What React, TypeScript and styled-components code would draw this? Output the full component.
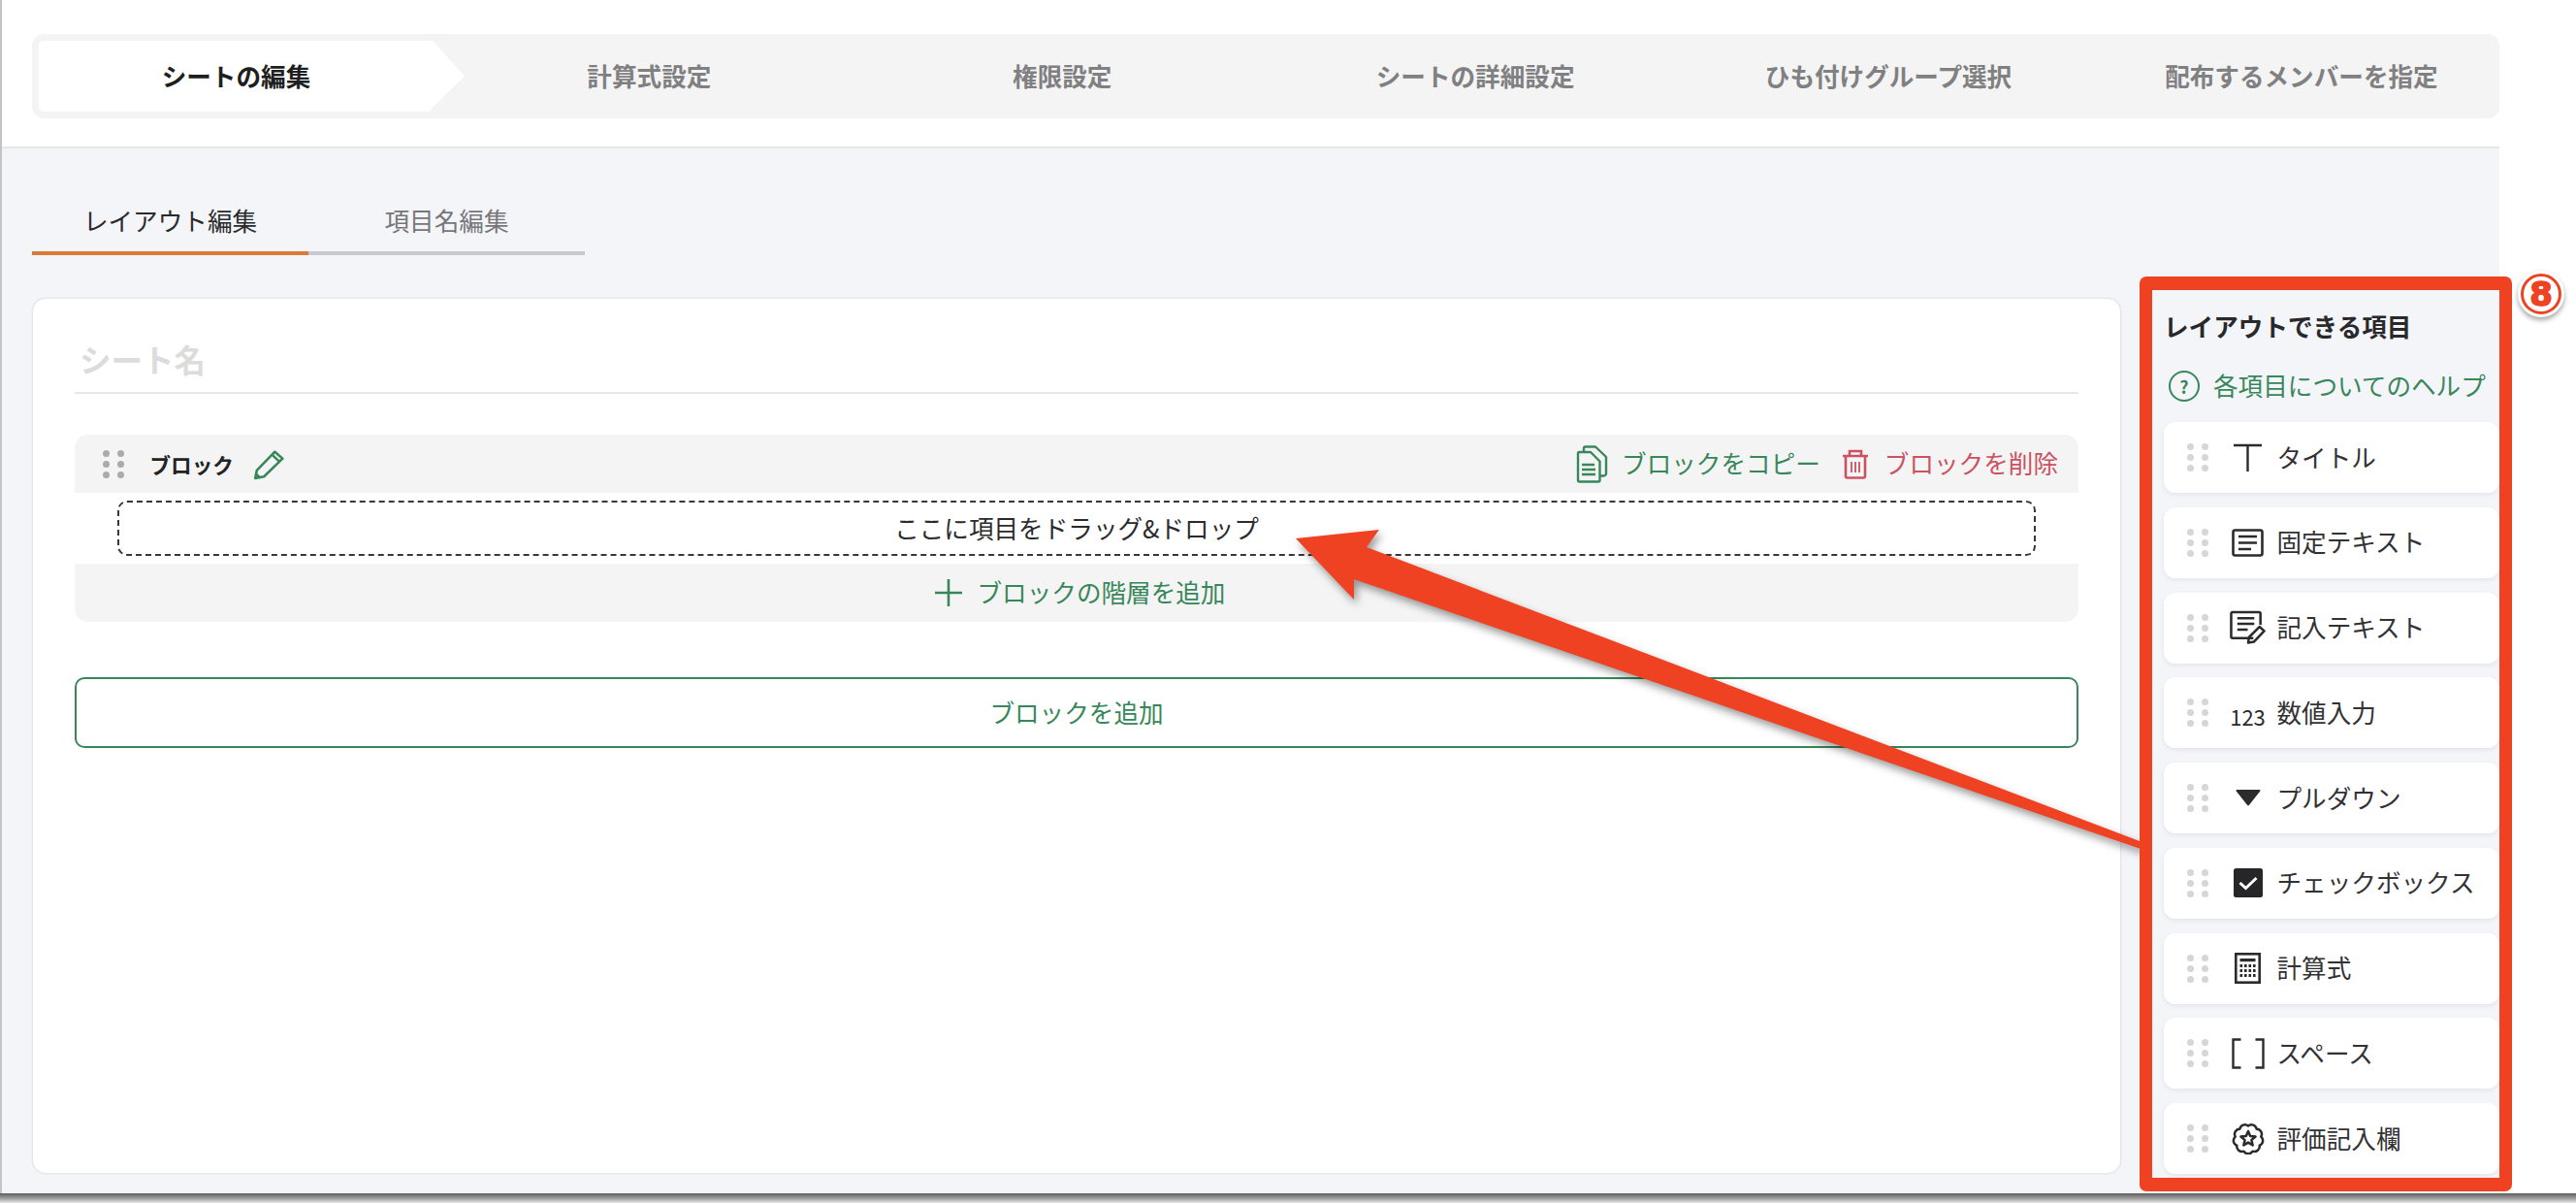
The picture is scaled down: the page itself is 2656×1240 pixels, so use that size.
import React from "react";
import styled, { createGlobalStyle } from "styled-components";

const GREEN = "#38875a";
const RED = "#ca5263";
const INK = "#2b2b2e";
const ANNOTATION = "#ee4223";

const GlobalStyle = createGlobalStyle`
  html, body {
    margin: 0;
    padding: 0;
    background: #fff;
  }
  * {
    box-sizing: border-box;
  }
  body {
    font-family: "Noto Sans CJK JP", "Noto Sans", sans-serif;
    color: ${INK};
  }
`;

const Screen = styled.div`
  position: relative;
  width: 2656px;
  height: 1240px;
  overflow: hidden;
  display: flex;
  flex-direction: column;
  background: #fff;
`;

const AppWindow = styled.div`
  width: 2577px;
  height: 1230px;
  flex: none;
  display: flex;
  flex-direction: column;
  border-left: 2px solid #c4c4c6;
`;

const WindowShadow = styled.div`
  height: 10px;
  flex: none;
  background: linear-gradient(#5e5e5e, #9a9a9a 50%, #e6e6e6);
`;

const Header = styled.header`
  height: 153px;
  flex: none;
  padding: 35px 0 0 31px;
  background: #fff;
  border-bottom: 2px solid #e6e7ea;
`;

const Stepper = styled.nav`
  position: relative;
  height: 87px;
  display: grid;
  grid-template-columns: repeat(6, 425.9px);
  background: #f4f4f4;
  border-radius: 12px;
  isolation: isolate;
`;

const StepTab = styled.div<{ $active?: boolean }>`
  margin-left: -5px;
  padding-bottom: 2px;
  display: flex;
  align-items: center;
  justify-content: center;
  font-size: 25.6px;
  font-weight: 700;
  white-space: nowrap;
  color: ${(p) => (p.$active ? "#1f1f21" : "#808082")};

  ${(p) =>
    p.$active &&
    `
    &::before {
      content: "";
      position: absolute;
      z-index: -1;
      left: 7px;
      top: 7px;
      width: 439px;
      height: 73px;
      background: #fff;
      border-radius: 5px 0 0 5px;
      clip-path: polygon(0 0, 406px 0, 439px 50%, 402px 100%, 0 100%);
    }
  `}
`;

const Body = styled.main`
  flex: 1;
  min-height: 0;
  display: flex;
  flex-direction: column;
  padding: 44px 0 0 31px;
  background: #f4f5f9;
`;

const Tabs = styled.div`
  display: flex;
  flex: none;
`;

const TabItem = styled.div<{ $active?: boolean }>`
  width: 285px;
  height: 66px;
  padding-bottom: 4px;
  display: flex;
  align-items: center;
  justify-content: center;
  font-size: 25.6px;
  color: ${(p) => (p.$active ? "#2b2b2e" : "#77777a")};
  border-bottom: 4px solid ${(p) => (p.$active ? "#d97a38" : "#c9cacf")};
`;

const Columns = styled.div`
  flex: 1;
  min-height: 0;
  margin-top: 44px;
  display: flex;
  align-items: flex-start;
`;

const Card = styled.section`
  width: 2154px;
  height: 903px;
  flex: none;
  padding: 38px 43px 0;
  display: flex;
  flex-direction: column;
  background: #fff;
  border: 1px solid #e4e4e9;
  border-radius: 14px;
  box-shadow: 0 0 2px rgba(40, 40, 70, 0.08);
`;

const SheetName = styled.div`
  height: 60px;
  flex: none;
  font-size: 32.5px;
  line-height: 48px;
  font-weight: 700;
  color: #dcdcdc;
  padding-left: 5px;
  border-bottom: 2px solid #e8e8e8;
`;

const Block = styled.div`
  margin-top: 42px;
  flex: none;
  height: 193px;
  display: flex;
  flex-direction: column;
  background: #f4f4f4;
  border-radius: 14px;
  overflow: hidden;
`;

const BlockHeader = styled.div`
  height: 60px;
  flex: none;
  display: flex;
  align-items: center;
  padding: 0 21px 0 29px;
`;

const BlockName = styled.span`
  margin-left: 26.5px;
  font-size: 21.6px;
  font-weight: 700;
  color: #232325;
`;

const EditButton = styled.span`
  margin-left: 20px;
  display: flex;
`;

const BlockActions = styled.div`
  margin-left: auto;
  display: flex;
  align-items: center;
`;

const ActionLink = styled.span<{ $danger?: boolean }>`
  display: flex;
  align-items: center;
  gap: ${(p) => (p.$danger ? 16 : 14)}px;
  margin-left: ${(p) => (p.$danger ? 22 : 0)}px;
  font-size: 25.6px;
  color: ${(p) => (p.$danger ? RED : GREEN)};
`;

const Caption = styled.span`
  margin-top: -3px;
  white-space: nowrap;
`;

const DropRow = styled.div`
  height: 73px;
  flex: none;
  padding: 8px 44px;
  background: #fff;
`;

const DropZone = styled.div`
  height: 57px;
  padding-bottom: 3px;
  display: flex;
  align-items: center;
  justify-content: center;
  font-size: 25.6px;
  color: #2b2b2e;
  border: 2px dashed #38383a;
  border-radius: 10px;
`;

const AddLevel = styled.div`
  flex: 1;
  padding-left: 7px;
  display: flex;
  align-items: center;
  justify-content: center;
  gap: 16px;
  font-size: 25.6px;
  color: ${GREEN};
`;

const AddBlockButton = styled.div`
  margin-top: 57px;
  height: 73px;
  padding-bottom: 3px;
  flex: none;
  display: flex;
  align-items: center;
  justify-content: center;
  font-size: 25.6px;
  color: ${GREEN};
  background: #fff;
  border: 2px solid ${GREEN};
  border-radius: 10px;
`;

const Palette = styled.aside`
  width: 346px;
  flex: none;
  margin-left: 44px;
  padding-top: 11px;
  display: flex;
  flex-direction: column;
`;

const PaletteTitle = styled.div`
  height: 36px;
  font-size: 25.6px;
  line-height: 36px;
  font-weight: 700;
  color: #29292b;
  white-space: nowrap;
`;

const HelpLink = styled.div`
  margin-top: 26px;
  padding-left: 5px;
  height: 36px;
  display: flex;
  align-items: center;
  gap: 14px;
  font-size: 25.6px;
  color: ${GREEN};
`;

const HelpMark = styled.span`
  width: 32px;
  height: 32px;
  flex: none;
  display: flex;
  align-items: center;
  justify-content: center;
  border: 2.5px solid ${GREEN};
  border-radius: 50%;
  font-size: 18px;
  font-weight: 700;
`;

const PaletteList = styled.div`
  margin-top: 19px;
  display: flex;
  flex-direction: column;
  gap: 14.75px;
`;

const PaletteItem = styled.div`
  height: 73px;
  display: flex;
  align-items: center;
  padding-left: 24px;
  background: #fff;
  border-radius: 12px;
  box-shadow: 0 2px 5px rgba(30, 30, 60, 0.07);
`;

const IconSlot = styled.span`
  width: 37px;
  margin-left: 22px;
  margin-right: 11.5px;
  flex: none;
  display: flex;
  align-items: center;
  justify-content: center;
  color: ${INK};
`;

const NumberGlyph = styled.span`
  font-size: 22px;
  line-height: 1;
  margin-top: 7px;
  white-space: nowrap;
`;

const ItemLabel = styled.span`
  margin-top: -3px;
  font-size: 25.6px;
  color: #323235;
  white-space: nowrap;
`;

const AnnotationFrame = styled.div`
  position: absolute;
  left: 2206px;
  top: 285px;
  width: 384px;
  height: 943px;
  border: solid ${ANNOTATION};
  border-width: 14px 13px;
  border-radius: 7px;
  pointer-events: none;
`;

const AnnotationBadge = styled.div`
  position: absolute;
  left: 2596px;
  top: 279px;
  width: 48px;
  height: 48px;
  padding: 3px;
  background: #fff;
  border-radius: 50%;
  box-shadow: 0 3px 5px rgba(0, 0, 0, 0.35);
`;

const BadgeRing = styled.div`
  width: 100%;
  height: 100%;
  display: flex;
  align-items: center;
  justify-content: center;
  border: 3px solid ${ANNOTATION};
  border-radius: 50%;
  color: ${ANNOTATION};
  font-family: "DejaVu Sans", "Liberation Sans", sans-serif;
  font-size: 34px;
  font-weight: 700;
  line-height: 1;
  -webkit-text-stroke: 1.5px ${ANNOTATION};
`;

const ArrowSvg = styled.svg`
  position: absolute;
  left: 1320px;
  top: 530px;
  overflow: visible;
  pointer-events: none;
  filter: drop-shadow(3px 5px 4px rgba(0, 0, 0, 0.4));
`;

const DragDots = ({ color }: { color: string }) => (
  <svg width="22" height="29" viewBox="0 0 22 29" fill={color} style={{ flex: "none" }}>
    {[3.5, 14.5, 25.5].map((cy) => (
      <React.Fragment key={cy}>
        <circle cx="3.5" cy={cy} r="3.5" />
        <circle cx="18.5" cy={cy} r="3.5" />
      </React.Fragment>
    ))}
  </svg>
);

const PencilIcon = () => (
  <svg width="32" height="33" viewBox="0 0 30 31" fill="none" stroke={GREEN} strokeWidth="2.4" strokeLinejoin="round">
    <path d="M2 29 L3.5 21.5 L21 3.5 L28.5 10 L10.5 27.5 Z" />
    <path d="M18.5 6.5 L25.5 13" />
    <path d="M2.5 24.5 L6.5 28.5" />
  </svg>
);

const CopyIcon = () => (
  <svg width="33" height="39" viewBox="0 0 33 39" fill="none" stroke={GREEN} strokeWidth="2.4" strokeLinejoin="round">
    <path d="M2 8.5 a1.5 1.5 0 0 1 1.5 -1.5 H15 L24.5 16.5 V36 a1.5 1.5 0 0 1 -1.5 1.5 H3.5 A1.5 1.5 0 0 1 2 36 Z" />
    <path d="M8 7 V3 a1.5 1.5 0 0 1 1.5 -1.5 H20 L31 12 V29 a2.5 2.5 0 0 1 -2.5 2.5 H24.5" />
    <path d="M6 20 H19 M6 25 H20 M6 30 H20" strokeWidth="2.6" />
  </svg>
);

const TrashIcon = () => (
  <svg width="28" height="31" viewBox="0 0 28 31" fill="none" stroke={RED} strokeWidth="2.6">
    <path d="M1 7 H27" />
    <path d="M8 6 V2 H20 V6" />
    <path d="M4 7 V28 a1.5 1.5 0 0 0 1.5 1.5 H22.5 a1.5 1.5 0 0 0 1.5 -1.5 V7" />
    <path d="M10 13 V24 M14 13 V24 M18 13 V24" strokeWidth="1.8" />
  </svg>
);

const PlusIcon = () => (
  <svg width="28" height="28" viewBox="0 0 28 28" stroke={GREEN} strokeWidth="2.6">
    <path d="M0 14 H28 M14 0 V28" />
  </svg>
);

const TitleIcon = () => (
  <svg width="29" height="29" viewBox="0 0 29 29" fill="none" stroke={INK} strokeWidth="2.4">
    <path d="M0 2 H29 M14.5 2 V29" />
  </svg>
);

const FixedTextIcon = () => (
  <svg width="33" height="29" viewBox="0 0 33 29" fill="none" stroke={INK} strokeWidth="2.6">
    <rect x="1.5" y="1.5" width="30" height="26" rx="2" />
    <path d="M7 8 H26 M7 14.5 H26 M7 21 H20" />
  </svg>
);

const InputTextIcon = () => (
  <svg width="38" height="36" viewBox="0 0 38 36" fill="none" stroke={INK} strokeWidth="2.6">
    <path d="M25 29 H3 a1.5 1.5 0 0 1 -1.5 -1.5 V3 A1.5 1.5 0 0 1 3 1.5 H31 a1.5 1.5 0 0 1 1.5 1.5 V15" />
    <path d="M8 8 H26 M8 14 H26 M8 20 H19" />
    <path d="M19.5 34 L20.5 28 L31.5 17 L36.5 21.5 L25.5 33 Z" strokeLinejoin="round" />
  </svg>
);

const PulldownIcon = () => (
  <svg width="26" height="17" viewBox="0 0 26 17" fill={INK}>
    <path d="M1.5 0 H24.5 a1 1 0 0 1 .8 1.6 L14 15.8 a1.2 1.2 0 0 1 -2 0 L.7 1.6 A1 1 0 0 1 1.5 0 Z" />
  </svg>
);

const CheckIcon = () => (
  <svg width="30" height="30" viewBox="0 0 30 30">
    <rect width="30" height="30" rx="2.5" fill="#262629" />
    <path d="M6.5 15 L12.5 20.5 L23.5 10" fill="none" stroke="#fff" strokeWidth="3" />
  </svg>
);

const CalculatorIcon = () => (
  <svg width="27" height="32" viewBox="0 0 27 32" fill={INK}>
    <rect x="1.3" y="1.3" width="24.4" height="29.4" fill="none" stroke={INK} strokeWidth="2.6" />
    <rect x="5.5" y="6" width="16" height="3.2" />
    {[12, 17, 22].map((y) =>
      [5.5, 10, 14.5, 19].map((x) => <rect key={`${x}-${y}`} x={x} y={y} width="2.6" height="3" />)
    )}
  </svg>
);

const SpaceIcon = () => (
  <svg width="34" height="32" viewBox="0 0 34 32" fill="none" stroke={INK} strokeWidth="2.4">
    <path d="M9.5 1.5 H1.5 V30.5 H9.5" />
    <path d="M24.5 1.5 H32.5 V30.5 H24.5" />
  </svg>
);

const polar = (r: number, deg: number) => {
  const a = ((deg - 90) * Math.PI) / 180;
  return `${(17 + r * Math.cos(a)).toFixed(2)} ${(16 + r * Math.sin(a)).toFixed(2)}`;
};

const scallopPath = () => {
  const bumps = 9;
  let d = `M${polar(13.5, 0)}`;
  for (let i = 0; i < bumps; i++) {
    d += ` A5.4 5.4 0 0 1 ${polar(13.5, ((i + 1) * 360) / bumps)}`;
  }
  return d + " Z";
};

const starPoints = () =>
  Array.from({ length: 10 }, (_, i) => polar(i % 2 ? 3.6 : 8, i * 36)).join(" ");

const RatingIcon = () => (
  <svg width="34" height="32" viewBox="0 0 34 32" fill="none" stroke={INK} strokeWidth="2.5" strokeLinejoin="round">
    <path d={scallopPath()} />
    <polygon points={starPoints()} />
  </svg>
);

const steps = ["シートの編集", "計算式設定", "権限設定", "シートの詳細設定", "ひも付けグループ選択", "配布するメンバーを指定"];

const paletteItems: { label: string; icon: React.ReactNode }[] = [
  { label: "タイトル", icon: <TitleIcon /> },
  { label: "固定テキスト", icon: <FixedTextIcon /> },
  { label: "記入テキスト", icon: <InputTextIcon /> },
  { label: "数値入力", icon: <NumberGlyph>123</NumberGlyph> },
  { label: "プルダウン", icon: <PulldownIcon /> },
  { label: "チェックボックス", icon: <CheckIcon /> },
  { label: "計算式", icon: <CalculatorIcon /> },
  { label: "スペース", icon: <SpaceIcon /> },
  { label: "評価記入欄", icon: <RatingIcon /> },
];

export default function App() {
  return (
    <Screen>
      <GlobalStyle />
      <AppWindow>
        <Header>
          <Stepper>
            {steps.map((step, i) => (
              <StepTab key={step} $active={i === 0}>
                {step}
              </StepTab>
            ))}
          </Stepper>
        </Header>
        <Body>
          <Tabs>
            <TabItem $active>レイアウト編集</TabItem>
            <TabItem>項目名編集</TabItem>
          </Tabs>
          <Columns>
            <Card>
              <SheetName>シート名</SheetName>
              <Block>
                <BlockHeader>
                  <DragDots color="#ababab" />
                  <BlockName>ブロック</BlockName>
                  <EditButton>
                    <PencilIcon />
                  </EditButton>
                  <BlockActions>
                    <ActionLink>
                      <CopyIcon />
                      <Caption>ブロックをコピー</Caption>
                    </ActionLink>
                    <ActionLink $danger>
                      <TrashIcon />
                      <Caption>ブロックを削除</Caption>
                    </ActionLink>
                  </BlockActions>
                </BlockHeader>
                <DropRow>
                  <DropZone>ここに項目をドラッグ&amp;ドロップ</DropZone>
                </DropRow>
                <AddLevel>
                  <PlusIcon />
                  <Caption>ブロックの階層を追加</Caption>
                </AddLevel>
              </Block>
              <AddBlockButton>ブロックを追加</AddBlockButton>
            </Card>
            <Palette>
              <PaletteTitle>レイアウトできる項目</PaletteTitle>
              <HelpLink>
                <HelpMark>?</HelpMark>
                <Caption>各項目についてのヘルプ</Caption>
              </HelpLink>
              <PaletteList>
                {paletteItems.map((item) => (
                  <PaletteItem key={item.label}>
                    <DragDots color="#d6d6d6" />
                    <IconSlot>{item.icon}</IconSlot>
                    <ItemLabel>{item.label}</ItemLabel>
                  </PaletteItem>
                ))}
              </PaletteList>
            </Palette>
          </Columns>
        </Body>
      </AppWindow>
      <WindowShadow />
      <ArrowSvg width="900" height="360" viewBox="1320 530 900 360">
        <polygon
          fill={ANNOTATION}
          points="1336,555 1422,546 1409,564 2206,867 2210,876 1396,597 1396,618"
        />
      </ArrowSvg>
      <AnnotationFrame />
      <AnnotationBadge>
        <BadgeRing>8</BadgeRing>
      </AnnotationBadge>
    </Screen>
  );
}
